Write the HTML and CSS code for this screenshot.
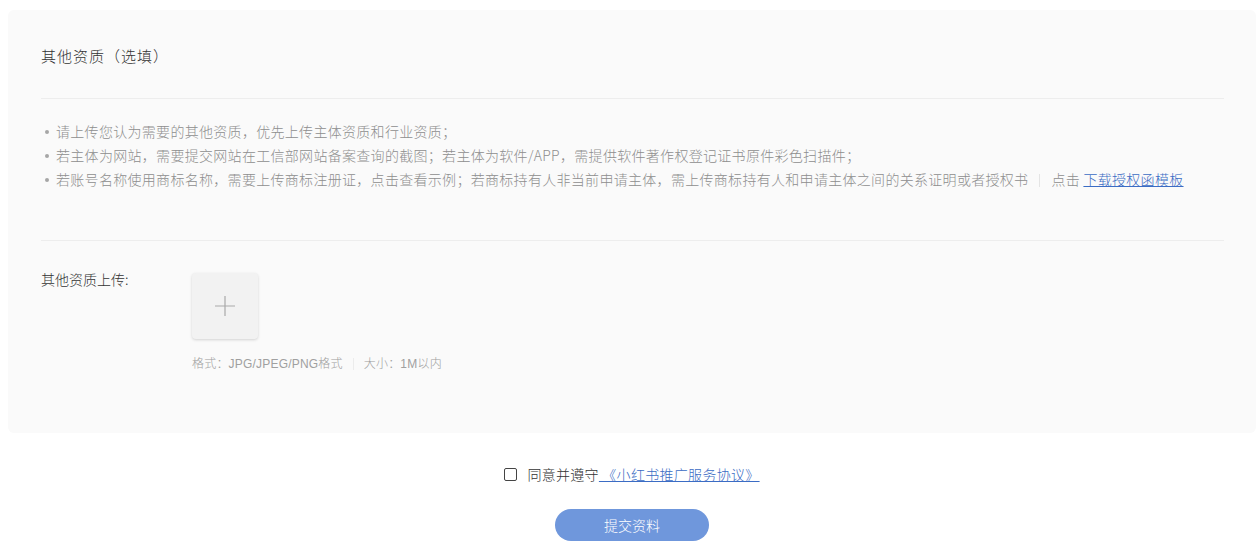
FILE: index.html
```html
<!DOCTYPE html>
<html lang="zh-CN">
<head>
    <meta charset="UTF-8">
    <meta name="viewport" content="width=device-width, initial-scale=1.0">
    <title>其他资质</title>
    <link rel="stylesheet" href="styles.css">
</head>
<body>

<div class="page">
    <div class="card">
        <div class="card-title">其他资质（选填）</div>

        <ul class="tips">
            <li>请上传您认为需要的其他资质，优先上传主体资质和行业资质；</li>
            <li>若主体为网站，需要提交网站在工信部网站备案查询的截图；若主体为软件/APP，需提供软件著作权登记证书原件彩色扫描件；</li>
            <li>若账号名称使用商标名称，需要上传商标注册证，点击查看示例；若商标持有人非当前申请主体，需上传商标持有人和申请主体之间的关系证明或者授权书<span class="sep"></span>点击 <a href="#" class="link">下载授权函模板</a></li>
        </ul>

        <div class="upload-row">
            <div class="upload-label">其他资质上传:</div>
            <div class="upload-field">
                <div class="upload-box">
                    <svg width="22" height="22" viewBox="0 0 22 22">
                        <path d="M11 1v20M1 11h20" stroke="#a9a9a9" stroke-width="1.2" fill="none"/>
                    </svg>
                </div>
                <div class="upload-hint">格式：JPG/JPEG/PNG格式<span class="sep"></span>大小：1M以内</div>
            </div>
        </div>
    </div>

    <div class="footer">
        <label class="agree">
            <span class="checkbox"></span>
            同意并遵守<a href="#" class="link"> 《小红书推广服务协议》</a>
        </label>
        <button class="submit">提交资料</button>
    </div>
</div>

</body>
</html>
```

FILE: styles.css
```css
body {
    margin: 0;
    padding: 0;
    background-color: #fff;
    font-family: "PingFang SC", "Noto Sans CJK SC", "Noto Sans", sans-serif;
    font-weight: 300;
    color: #333;
}

.page {
    width: 1248px;
    margin-left: 8px;
}

.card {
    margin-top: 10px;
    background-color: #fafafa;
    border-radius: 6px;
    padding: 36px 32px 61px 33px;
}

.card-title {
    font-size: 15px;
    line-height: 20px;
    letter-spacing: 1px;
    color: #333;
    padding-bottom: 32px;
    border-bottom: 1px solid #ededed;
}

.tips {
    list-style: none;
    margin: 0;
    padding: 20px 0 49px;
    border-bottom: 1px solid #ededed;
    font-size: 14px;
    line-height: 24px;
    letter-spacing: 0.3px;
    color: #8e8e8e;
}

.tips li {
    position: relative;
    padding-left: 15px;
    white-space: nowrap;
}

.tips li::before {
    content: "";
    position: absolute;
    left: 4px;
    top: 11px;
    width: 4px;
    height: 4px;
    border-radius: 50%;
    background-color: #a6a6a6;
}

.sep {
    display: inline-block;
    width: 1px;
    height: 13px;
    background-color: #e4e4e4;
    margin: 0 11px;
    vertical-align: -2px;
}

.link {
    color: #3b6cc4;
    text-decoration: underline;
}

.upload-row {
    display: flex;
    padding-top: 28px;
}

.upload-label {
    width: 151px;
    font-size: 14px;
    line-height: 20px;
    color: #333;
}

.upload-field {
    padding-top: 4px;
}

.upload-box {
    width: 66px;
    height: 66px;
    display: flex;
    align-items: center;
    justify-content: center;
    background-color: #f2f2f2;
    border-radius: 4px;
    box-shadow: 0 1px 3px rgba(0, 0, 0, 0.16);
}

.upload-hint {
    margin-top: 17px;
    font-family: "Liberation Sans", "Noto Sans CJK SC", sans-serif;
    font-size: 12px;
    line-height: 16px;
    letter-spacing: 0.2px;
    color: #a0a0a0;
}

.upload-hint .sep {
    height: 12px;
    margin: 0 10px;
    background-color: #ececec;
}

.footer {
    display: flex;
    flex-direction: column;
    align-items: center;
    padding-top: 31px;
}

.agree {
    display: flex;
    align-items: center;
    font-size: 14px;
    line-height: 20px;
    letter-spacing: 0.3px;
    color: #333;
}

.checkbox {
    width: 11px;
    height: 11px;
    border: 1px solid #444;
    border-radius: 2px;
    margin-right: 10px;
}

.agree .link {
    white-space: pre;
}

.submit {
    margin-top: 25px;
    width: 154px;
    height: 32px;
    border: none;
    border-radius: 16px;
    background-color: #6f97dc;
    color: #fff;
    font-family: inherit;
    font-weight: 300;
    font-size: 14px;
    cursor: pointer;
}
```
